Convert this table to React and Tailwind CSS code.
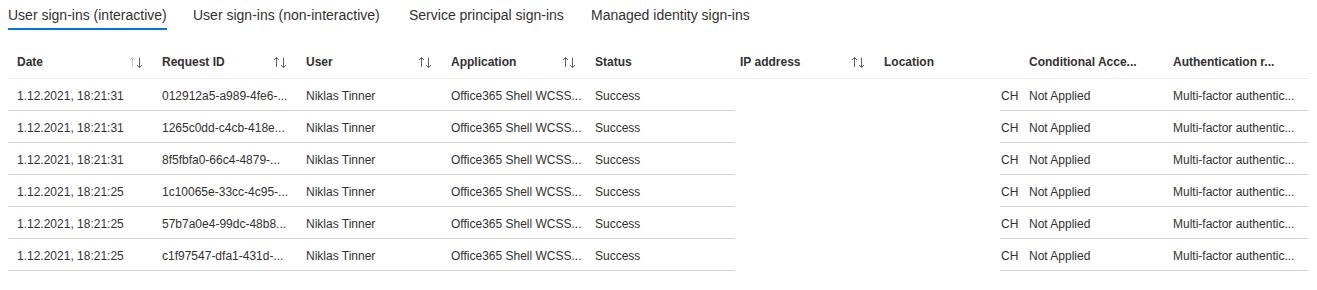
import React from 'react';

const tabs = [
  { label: 'User sign-ins (interactive)', w: 'w-[185px]', active: true },
  { label: 'User sign-ins (non-interactive)', w: 'w-[216px]' },
  { label: 'Service principal sign-ins', w: 'w-[182px]' },
  { label: 'Managed identity sign-ins', w: 'w-auto' },
];

const columns = [
  { label: 'Date', sort: 'desc' },
  { label: 'Request ID', sort: true },
  { label: 'User', sort: true },
  { label: 'Application', sort: true },
  { label: 'Status' },
  { label: 'IP address', sort: true },
  { label: 'Location' },
  { label: 'Conditional Acce...' },
  { label: 'Authentication r...' },
];

const rows = [
  ['1.12.2021, 18:21:31', '012912a5-a989-4fe6-...'],
  ['1.12.2021, 18:21:31', '1265c0dd-c4cb-418e...'],
  ['1.12.2021, 18:21:31', '8f5fbfa0-66c4-4879-...'],
  ['1.12.2021, 18:21:25', '1c10065e-33cc-4c95-...'],
  ['1.12.2021, 18:21:25', '57b7a0e4-99dc-48b8...'],
  ['1.12.2021, 18:21:25', 'c1f97547-dfa1-431d-...'],
];

const SortIcon = ({ desc }) => (
  <svg width="17" height="14" viewBox="0 0 17 14" fill="none" strokeWidth="1">
    <g stroke={desc ? '#c8c6c4' : '#605e5c'}>
      <path d="M4.5 12V2.5" />
      <path d="M2 5L4.5 2.5L7 5" />
    </g>
    <g stroke="#605e5c">
      <path d="M11.5 2.5V12.5" />
      <path d="M9 10L11.5 12.5L14 10" />
    </g>
  </svg>
);

const App = () => {
  return (
    <div className="w-[1317px] h-[290px] bg-white px-2 text-[#323130]" style={{ fontFamily: '"Liberation Sans", Arial, sans-serif' }}>
      {/* tabs */}
      <div className="flex h-[30px] text-[14px]">
        {tabs.map((t) => (
          <div key={t.label} className={t.w}>
            <div className={`inline-block h-[30px] pt-[6px] leading-[18px] ${t.active ? 'border-b-2 border-[#0078d4]' : ''}`}>
              {t.label}
            </div>
          </div>
        ))}
      </div>

      {/* header */}
      <div className="mt-[13px] grid h-[36px] grid-cols-[145px_144px_145px_144px_145px_144px_145px_144px_1fr] border-b border-[#edebe9] text-[12px] font-bold">
        {columns.map((c) => (
          <div key={c.label} className="flex items-center justify-between pt-[2px] pl-[9px] pr-[8px]">
            <span className="whitespace-nowrap">{c.label}</span>
            {c.sort && <SortIcon desc={c.sort === 'desc'} />}
          </div>
        ))}
      </div>

      {/* rows */}
      {rows.map(([date, id], i) => (
        <div key={i} className="flex h-[32px] text-[12px]">
          <div className="grid w-[727px] grid-cols-[145px_144px_145px_144px_1fr] border-b border-[#d2d0ce]">
            <div className="flex items-center pt-[2px] pl-[9px]">{date}</div>
            <div className="flex items-center pt-[2px] pl-[9px] whitespace-nowrap">{id}</div>
            <div className="flex items-center pt-[2px] pl-[9px]">Niklas Tinner</div>
            <div className="flex items-center pt-[2px] pl-[9px] whitespace-nowrap">Office365 Shell WCSS...</div>
            <div className="flex items-center pt-[2px] pl-[9px]">Success</div>
          </div>
          <div className="w-[265px]" />
          <div className="grid w-[308px] grid-cols-[29px_144px_1fr] border-b border-[#d2d0ce]">
            <div className="flex items-center pt-[2px] pl-[1px]">CH</div>
            <div className="flex items-center pt-[2px]">Not Applied</div>
            <div className="flex items-center pt-[2px] whitespace-nowrap">Multi-factor authentic...</div>
          </div>
        </div>
      ))}
    </div>
  );
};

export default App;
